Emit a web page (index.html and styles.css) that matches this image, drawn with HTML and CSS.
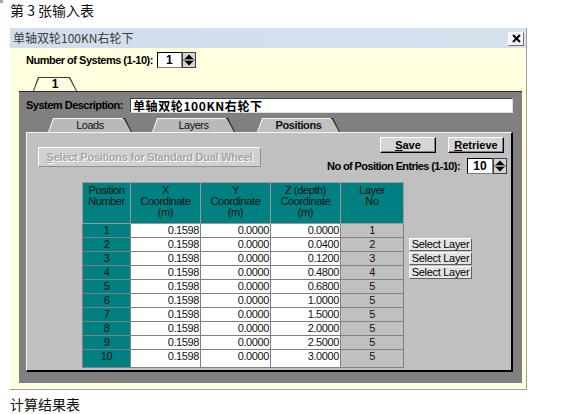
FILE: index.html
```html
<!DOCTYPE html>
<html lang="zh">
<head>
<meta charset="utf-8">
<title>输入表</title>
<link rel="stylesheet" href="styles.css">
</head>
<body>
<p class="caption">第 3 张输入表</p>
<div class="window">
  <div class="titlebar">
    <span class="title">单轴双轮100KN右轮下</span>
    <span class="close"><svg width="9" height="9" viewBox="0 0 9 9"><path d="M1 1 L8 8 M8 1 L1 8" stroke="#000" stroke-width="2"/></svg></span>
  </div>
  <div class="wbody">
    <div class="sys-row">
      <span class="lbl lbl-sys">Number of Systems (1-10):</span>
      <span class="spin">
        <span class="spin-val">1</span>
        <svg class="spin-btn" width="14" height="16" viewBox="0 0 14 16"><rect x="0.5" y="0.5" width="13" height="15" fill="#d4d4d4" stroke="#404040"/><line x1="1" y1="8" x2="13" y2="8" stroke="#404040"/><path d="M7 2.5 L11.5 7 H2.5Z" fill="#000"/><path d="M2.5 9 H11.5 L7 13.5Z" fill="#000"/></svg>
      </span>
    </div>
    <div class="tabs1"><span class="tab1"><span class="tab1-in">1</span></span></div>
    <div class="panel">
      <div class="desc-row">
        <span class="lbl lbl-desc">System Description:</span>
        <span class="desc-input">单轴双轮100KN右轮下</span>
      </div>
      <div class="tabs2">
        <span class="tab2"><span class="tab2-in">Loads</span></span>
        <span class="tab2"><span class="tab2-in">Layers</span></span>
        <span class="tab2 tab2-sel"><span class="tab2-in">Positions</span></span>
      </div>
      <div class="content">
        <div class="top-row">
          <button class="btn btn-disabled" type="button"><u>S</u>elect Positions for Standard Dual Wheel</button>
          <div class="right-col">
            <div class="btns">
              <button class="btn btn-main" type="button"><u>S</u>ave</button>
              <button class="btn btn-main" type="button"><u>R</u>etrieve</button>
            </div>
            <div class="entries">
              <span class="lbl lbl-ent">No of Position Entries (1-10):</span>
              <span class="spin">
                <span class="spin-val spin-val-wide">10</span>
                <svg class="spin-btn" width="14" height="16" viewBox="0 0 14 16"><rect x="0.5" y="0.5" width="13" height="15" fill="#d4d4d4" stroke="#404040"/><line x1="1" y1="8" x2="13" y2="8" stroke="#404040"/><path d="M7 2.5 L11.5 7 H2.5Z" fill="#000"/><path d="M2.5 9 H11.5 L7 13.5Z" fill="#000"/></svg>
              </span>
            </div>
          </div>
        </div>
        <div class="table-row">
          <table class="grid">
            <colgroup><col class="c-num"><col class="c-coord"><col class="c-coord"><col class="c-coord"><col class="c-layer"></colgroup>
            <thead>
              <tr><th>Position<br>Number</th><th>X<br>Coordinate<br>(m)</th><th>Y<br>Coordinate<br>(m)</th><th>Z (depth)<br>Coordinate<br>(m)</th><th>Layer<br>No</th></tr>
            </thead>
            <tbody>
              <tr><td class="n">1</td><td>0.1598</td><td>0.0000</td><td>0.0000</td><td class="l">1</td></tr>
              <tr><td class="n">2</td><td>0.1598</td><td>0.0000</td><td>0.0400</td><td class="l">2</td></tr>
              <tr><td class="n">3</td><td>0.1598</td><td>0.0000</td><td>0.1200</td><td class="l">3</td></tr>
              <tr><td class="n">4</td><td>0.1598</td><td>0.0000</td><td>0.4800</td><td class="l">4</td></tr>
              <tr><td class="n">5</td><td>0.1598</td><td>0.0000</td><td>0.6800</td><td class="l">5</td></tr>
              <tr><td class="n">6</td><td>0.1598</td><td>0.0000</td><td>1.0000</td><td class="l">5</td></tr>
              <tr><td class="n">7</td><td>0.1598</td><td>0.0000</td><td>1.5000</td><td class="l">5</td></tr>
              <tr><td class="n">8</td><td>0.1598</td><td>0.0000</td><td>2.0000</td><td class="l">5</td></tr>
              <tr><td class="n">9</td><td>0.1598</td><td>0.0000</td><td>2.5000</td><td class="l">5</td></tr>
              <tr class="last"><td class="n">10</td><td>0.1598</td><td>0.0000</td><td>3.0000</td><td class="l">5</td></tr>
            </tbody>
          </table>
          <div class="layer-btns">
            <button class="btn btn-layer" type="button">Select Layer</button>
            <button class="btn btn-layer" type="button">Select Layer</button>
            <button class="btn btn-layer" type="button">Select Layer</button>
          </div>
        </div>
      </div>
    </div>
  </div>
</div>
<p class="caption caption-bottom">计算结果表</p>
</body>
</html>
```

FILE: styles.css
```css
* { box-sizing: border-box; }

body {
  margin: 0;
  width: 584px;
  height: 414px;
  overflow: hidden;
  background: linear-gradient(#a8a8a8, #a8a8a8) 0 0 / 3px 3px no-repeat, #fff;
  font-family: "Liberation Sans", Arial, sans-serif;
  color: #000;
}

.caption {
  margin: 0;
  padding-left: 10px;
  height: 20px;
  font: 14px/20px "Noto Sans CJK SC", sans-serif;
  color: #111;
}
.caption-bottom { margin-top: 4px; }

.window {
  margin: 8px 0 0 10px;
  width: 517px;
  border-right: 1px solid #a0a0a0;
  border-bottom: 1px solid #a0a0a0;
}

.titlebar {
  height: 20px;
  background: linear-gradient(to right, #d2deed, #d6e1ee);
  display: flex;
  align-items: center;
  justify-content: space-between;
  padding: 0 2px 0 3px;
}
.title {
  font: 12px/20px "Noto Sans CJK SC", sans-serif;
  color: #3c3c3c;
}
.close {
  width: 16px;
  height: 14px;
  margin-top: 1px;
  background: #f4f4f4;
  border: 1px solid;
  border-color: #fff #707070 #707070 #fff;
  display: flex;
  align-items: center;
  justify-content: center;
}

.wbody {
  background: #ffffe0;
  height: 341px;
  padding: 4px 0 6px 0;
}

.lbl {
  font-weight: bold;
  font-size: 11px;
  letter-spacing: -0.5px;
  white-space: nowrap;
}
.lbl-ent { letter-spacing: -0.6px; }

.sys-row {
  display: flex;
  align-items: center;
  height: 16px;
  padding-left: 16px;
  gap: 4px;
}

.spin { display: flex; align-items: center; }
.spin-val {
  width: 25px;
  height: 16px;
  background: #fff;
  border: 1px solid;
  border-color: #000 #808080 #808080 #000;
  font: bold 12px/14px "Liberation Sans", Arial, sans-serif;
  text-align: center;
}
.spin-val-wide { width: 26px; }
.spin-btn { display: block; }

.tabs1 {
  margin-top: 9px;
  height: 14px;
  padding-left: 23px;
  display: flex;
}
.tab1 {
  width: 44px;
  height: 14px;
  background: #3a3a3a;
  clip-path: polygon(5px 0, calc(100% - 7px) 0, 100% 100%, 0 100%);
  padding: 1px 1px 0;
}
.tab1-in {
  display: block;
  height: 13px;
  background: #ffffe0;
  clip-path: polygon(5px 0, calc(100% - 7px) 0, 100% 100%, 0 100%);
  font: bold 12px/12px "Liberation Sans", Arial, sans-serif;
  text-align: center;
}

.panel {
  margin: 0 4px 0 9px;
  height: 292px;
  background: #808080;
  border-top: 1px solid #2a2a2a;
  padding: 6px 9px 0 7px;
}

.desc-row {
  display: flex;
  align-items: center;
  height: 14px;
}
.lbl-desc { width: 104px; flex: none; }
.desc-input {
  flex: 1;
  height: 15px;
  background: #fff;
  border: 1px solid;
  border-color: #404040 #e0e0e0 #e0e0e0 #404040;
  padding-left: 2px;
  font: bold 12px/13px "Noto Sans CJK SC", sans-serif;
  letter-spacing: 0.6px;
}

.tabs2 {
  margin-top: 6px;
  height: 14px;
  display: flex;
  padding-left: 22px;
}
.tab2 {
  width: 84px;
  height: 14px;
  margin-right: 20px;
  background: linear-gradient(to right, #f4f4f4 calc(100% - 9px), #202020 calc(100% - 9px));
  clip-path: polygon(5px 0, calc(100% - 7px) 0, 100% 100%, 0 100%);
  padding: 1px 1px 0;
}
.tab2 + .tab2 { width: 83px; }
.tab2-sel { margin-right: 0; margin-left: 2px; }
.tab2-in {
  display: block;
  height: 13px;
  background: #b9b9b9;
  clip-path: polygon(5px 0, calc(100% - 7px) 0, 100% 100%, 0 100%);
  font: 11px/13px "Liberation Sans", Arial, sans-serif;
  letter-spacing: -0.5px;
  text-align: center;
  color: #111;
}
.tab2-sel .tab2-in {
  background: #c0c0c0;
  font-weight: bold;
  letter-spacing: -0.4px;
}

.content {
  height: 240px;
  background: #c0c0c0;
  border-top: 1px solid #f4f4f4;
  border-left: 1px solid #f4f4f4;
  border-right: 2px solid #000;
  border-bottom: 2px solid #000;
  padding: 4px 4px 0 11px;
}

.top-row {
  display: flex;
  justify-content: space-between;
  align-items: flex-start;
}

.btn {
  margin: 0;
  padding: 0;
  font-family: "Liberation Sans", Arial, sans-serif;
  color: #000;
  background: #d6d6d6;
  border: 1px solid;
  border-color: #fff #000 #000 #fff;
  box-shadow: inset -1px -1px 0 #808080;
  white-space: nowrap;
}
.btn u { text-decoration-thickness: 1px; text-underline-offset: 1px; }

.btn-disabled {
  margin-top: 10px;
  width: 223px;
  height: 20px;
  font-size: 11px;
  font-weight: bold;
  letter-spacing: -0.25px;
  color: #a4a4a4;
  text-shadow: 1px 1px 0 #fff;
  background: #d0d0d0;
  border-color: #fff #909090 #909090 #fff;
  box-shadow: none;
}

.right-col {
  display: flex;
  flex-direction: column;
  align-items: flex-end;
}
.btns {
  display: flex;
  gap: 12px;
  margin-right: 3px;
}
.btn-main {
  width: 56px;
  height: 16px;
  font-size: 11px;
  font-weight: bold;
  line-height: 13px;
}
.entries {
  margin-top: 5px;
  display: flex;
  align-items: center;
  gap: 7px;
}

.table-row {
  margin-top: 8px;
  padding-left: 44px;
  display: flex;
  align-items: flex-start;
}

.grid {
  border-collapse: collapse;
  table-layout: fixed;
  width: 322px;
  font: 11px/13px "Liberation Sans", Arial, sans-serif;
  letter-spacing: -0.4px;
  color: #111;
}
.c-num { width: 48px; }
.c-coord { width: 70px; }
.c-layer { width: 63px; }

.grid th, .grid td {
  border: 1px solid #808080;
  padding: 0;
}
.grid th {
  height: 41px;
  background: #008080;
  font-weight: normal;
  line-height: 11px;
  vertical-align: top;
  padding-top: 2px;
  color: #101010;
  border-color: #9a9a9a;
}
.grid td {
  height: 14px;
  background: #fff;
  text-align: right;
  padding-right: 1px;
}
.grid td.n {
  background: #008080;
  text-align: center;
  padding-right: 0;
}
.grid td.l {
  background: #c0c0c0;
  text-align: center;
  padding-right: 0;
}
.grid tr.last td { height: 18px; vertical-align: top; }

.layer-btns {
  margin: 56px 0 0 5px;
  display: flex;
  flex-direction: column;
  gap: 1px;
}
.btn-layer {
  width: 63px;
  height: 13px;
  font: 11px/11px "Liberation Sans", Arial, sans-serif;
  letter-spacing: -0.3px;
  background: #e4e4e4;
  border-color: #fff #606060 #606060 #fff;
  box-shadow: none;
}
```
